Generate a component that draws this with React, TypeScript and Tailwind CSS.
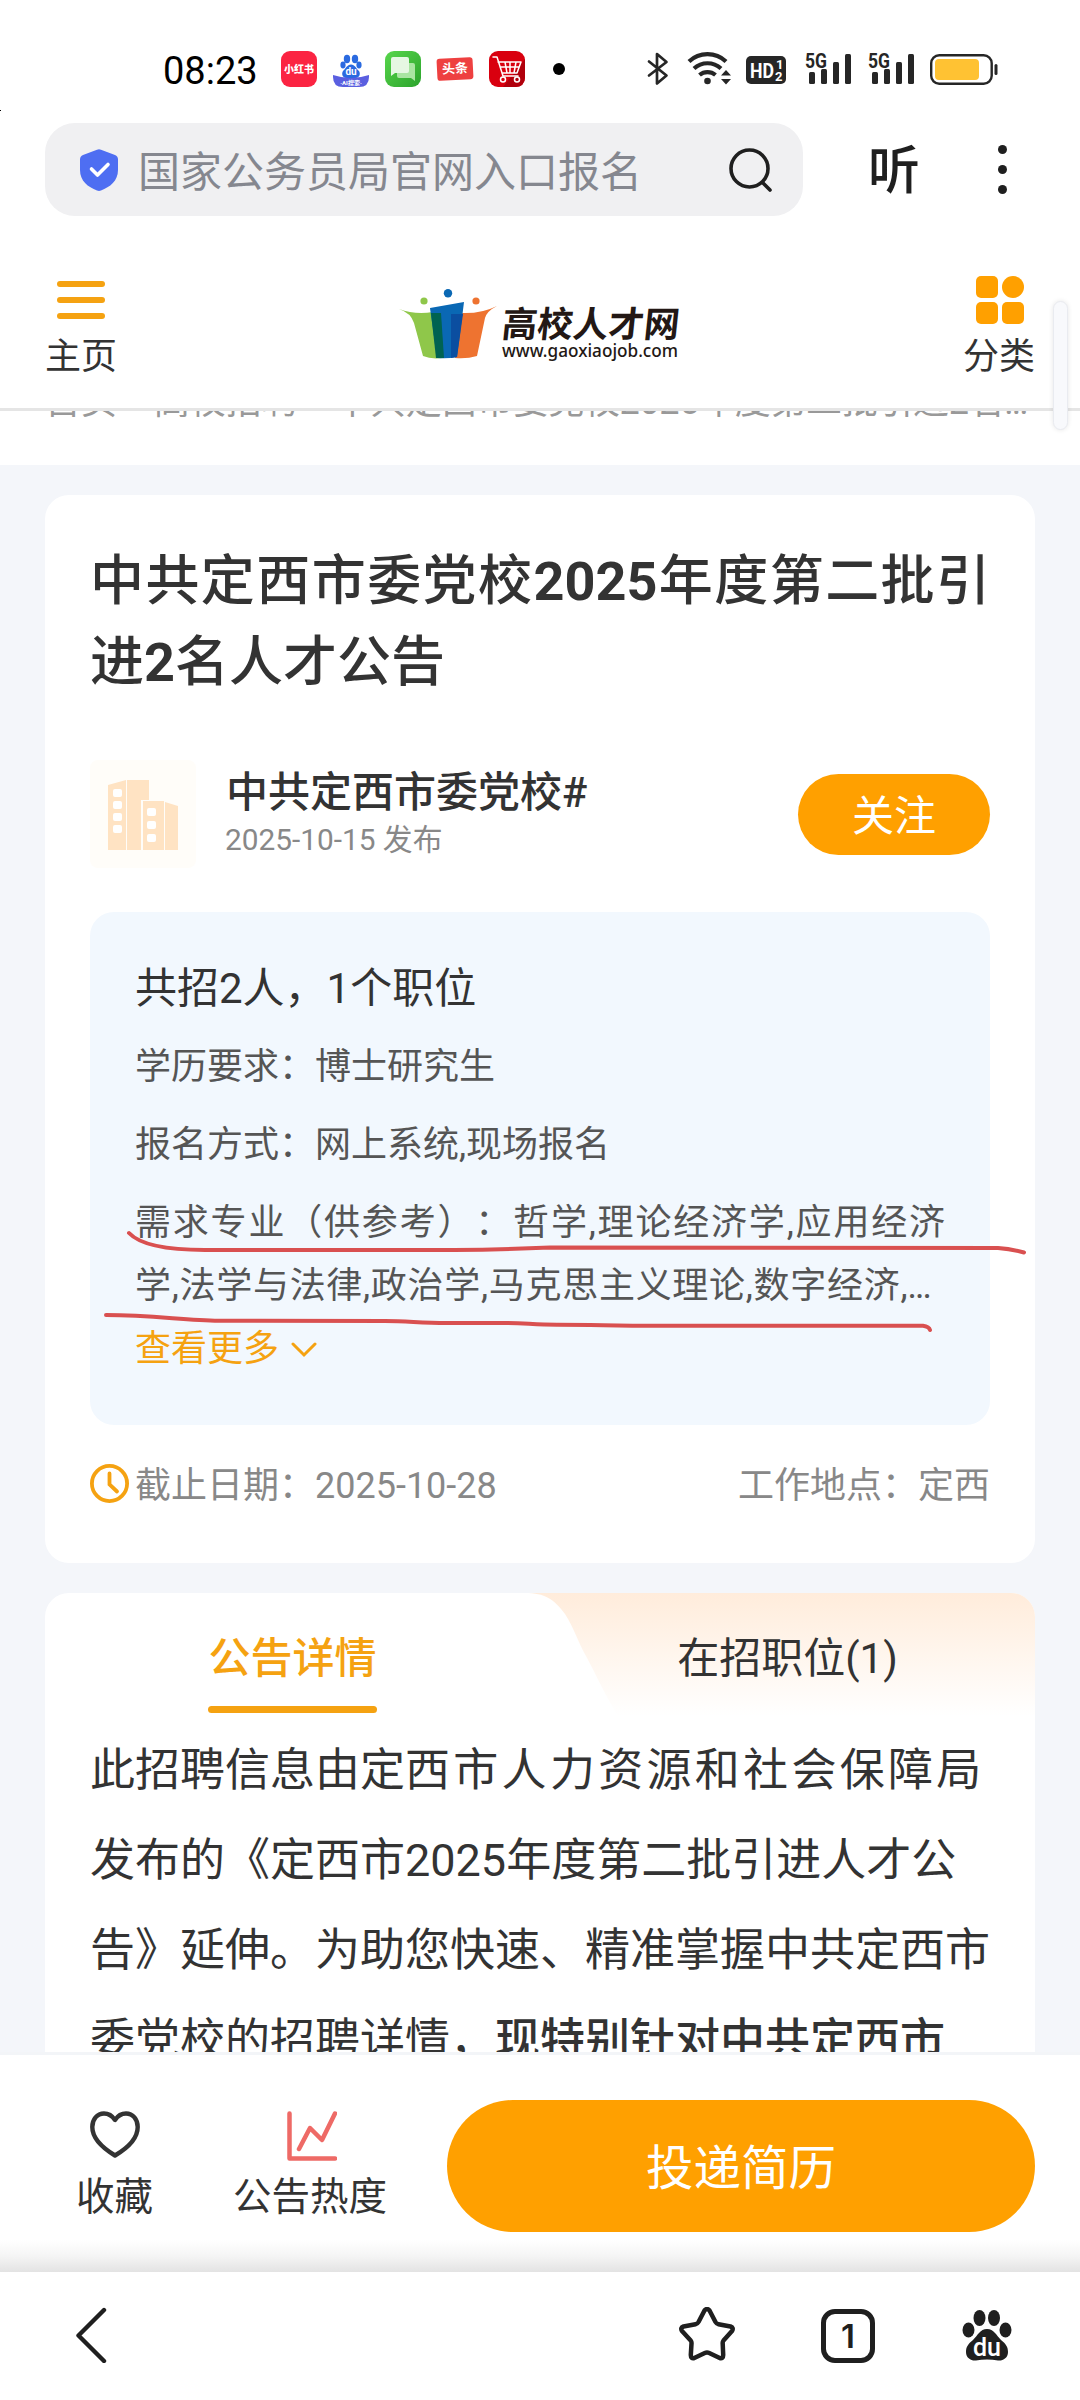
import clsx from 'clsx';
import type { ReactNode } from 'react';

type IconProps = {
  className?: string;
};

type InfoRow = {
  label: string;
  value: string;
};

const infoRows: InfoRow[] = [
  { label: '学历要求：', value: '博士研究生' },
  { label: '报名方式：', value: '网上系统,现场报名' },
];

function Signal() {
  return (
    <svg className="h-9 w-[47px] overflow-visible" viewBox="0 0 47 36" fill="#262626">
      <text
        x="0"
        y="16.5"
        fontFamily="Roboto, sans-serif"
        fontSize="21"
        fontWeight="700"
        textLength="22"
        lengthAdjust="spacingAndGlyphs"
      >
        5G
      </text>
      <rect x="4" y="21" width="6" height="12" rx="1.5" />
      <rect x="16" y="18" width="6" height="15" rx="1.5" />
      <rect x="28" y="11" width="6" height="22" rx="1.5" />
      <rect x="40" y="3" width="6" height="30" rx="1.5" />
    </svg>
  );
}

function AppIcons() {
  return (
    <div className="ml-[25px] flex items-center gap-4">
      <div className="flex size-9 items-center justify-center rounded-[9px] bg-[#fb2442] text-[10px] font-black text-white">
        小红书
      </div>
      <svg className="size-9" viewBox="0 0 36 36">
        <g fill="#2a6ae0">
          <ellipse cx="14" cy="8" rx="3.2" ry="4.2" />
          <ellipse cx="22" cy="8" rx="3.2" ry="4.2" />
          <ellipse cx="10" cy="14" rx="2.6" ry="3.4" />
          <ellipse cx="26" cy="14" rx="2.6" ry="3.4" />
          <path d="M18 13.5c4 0 5 4 8 6.500 2 3 0 7-3 7H13c-3 0-5-4-3-7 3-2.500 4-6.500 8-6.500Z" />
        </g>
        <path d="M0 24q18 6 36 0v2q0 10-10 10H10Q0 36 0 26Z" fill="#5a5fe0" />
        <text x="18" y="24" fontSize="10" fontWeight="700" fill="#fff" textAnchor="middle">
          du
        </text>
        <text x="18" y="33.5" fontSize="6" fontWeight="700" fill="#fff" textAnchor="middle">
          ·AI搜索·
        </text>
      </svg>
      <svg className="size-9" viewBox="0 0 36 36">
        <defs>
          <linearGradient id="chat" x1="0" y1="0" x2="1" y2="1">
            <stop offset="0" stopColor="#58d64c" />
            <stop offset="1" stopColor="#2ba32c" />
          </linearGradient>
        </defs>
        <rect width="36" height="36" rx="9" fill="url(#chat)" />
        <path d="M15 12h13q2 0 2 2v16l-4-3H14q-2 0-2-2V14Z" fill="#a9e5a2" />
        <path d="M8 6h14q2 0 2 2v12q0 2-2 2H10l-4 3V8q0-2 2-2Z" fill="#e6f7e3" />
      </svg>
      <div className="flex h-[22px] w-9 -rotate-3 items-center justify-center rounded-[3px] bg-[#ee4040] text-[13px] leading-[22px] font-bold text-white">
        头条
      </div>
      <svg className="size-9" viewBox="0 0 36 36">
        <rect width="36" height="36" rx="9" fill="#d9000f" />
        <path d="M36 8v18q0 10-10 10H14Z" fill="#b0000c" />
        <g fill="none" stroke="#fff" strokeWidth="1.5" strokeLinecap="round" strokeLinejoin="round">
          <path d="M4 6h4l6 19h15M9 11h23l-4 11H13M11 16h19M16 11l2 11M21 11v11M27 11l-2 11" />
          <circle cx="14" cy="28.5" r="2.5" />
          <circle cx="28" cy="28.5" r="2.5" />
        </g>
      </svg>
      <span className="ml-3 size-3 rounded-full bg-black" />
    </div>
  );
}

function StatusBar() {
  return (
    <div className="flex h-[110px] w-full items-center pt-[28px] pl-[163px]">
      <span className="mt-[3px] w-[93px] text-[38px] leading-none text-black">08:23</span>
      <AppIcons />
      <div className="ml-[82px] flex items-center">
        <svg className="h-9 w-[22px]" viewBox="0 0 22 36" fill="none" stroke="#262626" strokeWidth="2.7" strokeLinejoin="round" strokeLinecap="round">
          <path d="M2 10.5 19.5 24.5 10 32.5V3l9.5 8L2 24.5" />
        </svg>
        <svg className="ml-[18px] h-9 w-[46px]" viewBox="0 0 46 36" fill="none" stroke="#262626" strokeWidth="4.2">
          <path d="M2 10.5a27 27 0 0 1 37 0" />
          <path d="M7 17.5a20 20 0 0 1 27 0" />
          <path d="M12.5 24a12.5 12.5 0 0 1 16 0" />
          <circle cx="20.5" cy="30" r="3.3" fill="#262626" stroke="none" />
          <path d="M34 24.5 39 19l5 5.5ZM34 28l5 5.5 5-5.5Z" fill="#262626" stroke="none" />
        </svg>
        <svg className="ml-[13px] h-9 w-10" viewBox="0 0 40 36" fontFamily="Roboto, sans-serif" fontWeight="700" fill="#fff">
          <rect y="5" width="40" height="28" rx="5" fill="#262626" />
          <text x="4" y="26.5" fontSize="20.5" textLength="24" lengthAdjust="spacingAndGlyphs">
            HD
          </text>
          <text x="30" y="18" fontSize="13">1</text>
          <text x="29" y="29.5" fontSize="13">2</text>
        </svg>
        <div className="ml-[19px] flex gap-4">
          <Signal />
          <Signal />
        </div>
        <svg className="ml-[15px] h-9 w-[68px]" viewBox="0 0 68 36">
          <rect x="1.2" y="4.2" width="60.5" height="28.6" rx="8" fill="#fff" stroke="#262626" strokeWidth="2.4" />
          <rect x="5" y="8" width="44" height="21" rx="4" fill="#ffc233" />
          <rect x="64.5" y="13" width="3" height="11" rx="1.5" fill="#262626" />
        </svg>
      </div>
    </div>
  );
}

function AddressBar() {
  return (
    <div className="flex h-[138px] w-full items-start pt-[13px] pl-[45px]">
      <div className="flex h-[93px] w-[758px] items-center rounded-[30px] bg-[#f0f0f2] pl-[35px]">
        <svg className="h-[42px] w-[38px]" viewBox="0 0 38 42">
          <path
            d="M17 .8q2-.9 4 0L35 6q3 1.2 3 4.5V21c0 11-8 17-17 20.5q-2 .8-4 0C8 38 0 32 0 21V10.5Q0 7.2 3 6Z"
            fill="#4e6ef2"
          />
          <path d="m11.5 20 6 6L28 15.5" fill="none" stroke="#fff" strokeWidth="3.6" strokeLinecap="round" strokeLinejoin="round" />
        </svg>
        <span className="mt-[5px] ml-[20px] w-[505px] text-[42px] whitespace-nowrap text-[#85878f]">
          国家公务员局官网入口报名
        </span>
        <svg className="ml-[86px] size-11" viewBox="0 0 44 44" fill="none" stroke="#1f1f1f" strokeWidth="3.6" strokeLinecap="round">
          <circle cx="20.5" cy="20.5" r="18.5" />
          <path d="m34 35 7 7" />
        </svg>
      </div>
      <span className="mt-[15px] ml-[65px] text-[52px] leading-[68px] font-medium text-[#1f1f1f]">听</span>
      <div className="mt-[22px] ml-[78px] flex flex-col gap-[11px]">
        <span className="size-[9px] rounded-full bg-[#1f1f1f]" />
        <span className="size-[9px] rounded-full bg-[#1f1f1f]" />
        <span className="size-[9px] rounded-full bg-[#1f1f1f]" />
      </div>
    </div>
  );
}

function Logo() {
  return (
    <div className="flex">
      <svg className="h-[70px] w-[98px]" viewBox="0 0 98 70">
        <path d="M0 20q16 6 34 3l10 46q-12 1.5-20-2L15 34Q12 24 0 20Z" fill="#8fc74a" />
        <path d="M98 17q-16 8-36 7l-6 45q12 1 22-2l8-38Q88 22 98 17Z" fill="#ee7330" />
        <path d="M31 19 65 13l-7 55q-10 2-20 1Z" fill="#0a68b4" />
        <path d="M32 24h10l3 45h-8Z" fill="#006351" />
        <path d="M52 25h12l-6 43-6 1Z" fill="#0b4ea0" />
        <circle cx="25" cy="12" r="3.6" fill="#8fc74a" />
        <circle cx="49" cy="4.3" r="4.2" fill="#0a68b4" />
        <circle cx="77" cy="12" r="3.6" fill="#ee7330" />
      </svg>
      <div className="mt-[17px] ml-[5px] text-[#231815]">
        <div className="-skew-x-6 text-[35.5px] leading-[38px] font-bold whitespace-nowrap">高校人才网</div>
        <svg className="-mt-px h-6 w-[177px] overflow-visible" viewBox="0 0 177 24">
          <text
            x="0"
            y="14"
            fontFamily="'Noto Sans', sans-serif"
            fontSize="18"
            fontWeight="500"
            fill="#231815"
            textLength="176"
            lengthAdjust="spacingAndGlyphs"
          >
            www.gaoxiaojob.com
          </text>
        </svg>
      </div>
    </div>
  );
}

function SiteHeader() {
  return (
    <header className="flex h-[163px] w-full items-start border-b-3 border-[#e5e5e5] px-[45px] text-[36px] leading-[48px] text-[#333]">
      <div className="flex w-[72px] flex-col items-center">
        <div className="mt-[33px] flex w-12 flex-col gap-[10px]">
          <span className="h-[6px] rounded-full bg-[#f5a211]" />
          <span className="h-[6px] rounded-full bg-[#f5a211]" />
          <span className="h-[6px] rounded-full bg-[#f5a211]" />
        </div>
        <span className="mt-[14px]">主页</span>
      </div>
      <div className="mt-[41px] ml-[282px]">
        <Logo />
      </div>
      <div className="ml-auto flex w-[72px] flex-col items-center">
        <div className="mt-[28px] ml-[2px] grid grid-cols-2 gap-1">
          <span className="size-[22px] rounded-[5px] bg-[#ffa000]" />
          <span className="size-[22px] rounded-full bg-[#ffa000]" />
          <span className="size-[22px] rounded-[5px] bg-[#ffa000]" />
          <span className="size-[22px] rounded-[5px] bg-[#ffa000]" />
        </div>
        <span className="mt-[9px]">分类</span>
      </div>
    </header>
  );
}

function Breadcrumb() {
  return (
    <div className="flex h-[54px] w-full items-start overflow-hidden bg-white px-[45px] text-[36px] text-[#999]">
      <p className="-mt-[34px] h-[48px] w-[981px] leading-[50px] whitespace-nowrap">
        首页 &gt; 高校招聘 &gt;{' '}
        <span className="tracking-[-0.35px]">中共定西市委党校2025年度第二批引进2名</span>
        <span className="tracking-[-2px]">...</span>
      </p>
    </div>
  );
}

// Spreads the characters over the full width of the line
function FullLine({ children, className }: { children: ReactNode; className?: string }) {
  return (
    <div className={clsx('whitespace-nowrap [text-align-last:justify] [text-spacing-trim:space-all]', className)}>
      {children}
    </div>
  );
}

function BuildingIcon({ className }: IconProps) {
  return (
    <svg className={className} viewBox="0 0 70 70">
      <path d="M0 5 18 0v70H0ZM19 0h22v20h-8v50H19Z" fill="#ffe3c3" />
      <path d="M35 21h21v49H35ZM57 22l13 4v44H57Z" fill="#ffe3c3" />
      <g fill="#fff">
        <rect x="5" y="9" width="9" height="8" rx="2" />
        <rect x="5" y="21" width="9" height="8" rx="2" />
        <rect x="5" y="33" width="9" height="8" rx="2" />
        <rect x="5" y="45" width="9" height="8" rx="2" />
        <rect x="39" y="28" width="9" height="8" rx="2" />
        <rect x="39" y="41" width="9" height="8" rx="2" />
        <rect x="39" y="54" width="9" height="8" rx="2" />
      </g>
    </svg>
  );
}

function RedMarks() {
  return (
    <svg
      className="absolute top-[312px] left-[10px] h-[120px] w-[940px]"
      viewBox="101 1224 940 120"
      fill="none"
      stroke="#d95050"
      strokeWidth="4"
      strokeLinecap="round"
      strokeLinejoin="round"
    >
      <path d="M130 1233q16 17 76 17l249 0q50-.5 96-2.500l448 .5q14 1 26 4.500" />
      <path d="M107 1315C155 1315 185 1320.5 220 1320.7L386 1321C410 1321 420 1323 448 1323L503 1323C525 1323 535 1324.7 558 1324.7C600 1324.7 610 1325.7 661 1325.7L924 1325.7Q930 1326.5 931 1330" />
    </svg>
  );
}

function RecruitInfo() {
  return (
    <div className="relative mt-[44px] h-[513px] w-[900px] rounded-[24px] bg-[#f2f8fe] pt-[48px] pl-[45px] text-[36px] text-[#555]">
      <div className="text-[42px] leading-[58px] text-[#333]">共招2人，1个职位</div>
      <div className="mt-[10px]">
        {infoRows.map(({ label, value }) => (
          <div key={label} className="h-[78px] leading-[78px]">
            {label}
            {value}
          </div>
        ))}
      </div>
      <div className="mt-[8px] leading-[63px]">
        <FullLine className="w-[810px]">需求专业（供参考）：哲学,理论经济学,应用经济</FullLine>
        <FullLine className="w-[795px]">
          学,法学与法律,政治学,马克思主义理论,数字经济,<span className="tracking-[-2px]">...</span>
        </FullLine>
        <div className="flex items-center text-[#f5a211]">
          查看更多
          <svg className="ml-[12px] h-4 w-[26px]" viewBox="0 0 26 16" fill="none" stroke="currentColor" strokeWidth="3" strokeLinecap="round">
            <path d="m2 2 11 11L24 2" />
          </svg>
        </div>
      </div>
      <RedMarks />
    </div>
  );
}

function AnnouncementCard() {
  return (
    <section className="h-[1068px] w-[990px] rounded-[24px] bg-white px-[45px] pt-[46px]">
      <h1 className="text-[54px] leading-[81px] font-medium text-[#333]">
        <FullLine>
          中共定西市委党校<b className="font-bold">2025</b>年度第二批引
        </FullLine>
        <FullLine className="w-[355px]">
          进<b className="font-bold">2</b>名人才公告
        </FullLine>
      </h1>
      <div className="mt-[57px] flex h-[108px] items-center">
        <div className="flex h-[108px] w-[106px] items-center justify-center rounded-lg bg-[#fffdf9]">
          <BuildingIcon className="mt-px size-[70px]" />
        </div>
        <div className="ml-[30px] flex-1">
          <div className="text-[42px] leading-[52px] font-medium text-[#333]">中共定西市委党校#</div>
          <div className="-ml-px text-[29.8px] leading-[42px] text-[#888]">2025-10-15 发布</div>
        </div>
        <button
          type="button"
          className="h-[81px] w-[192px] rounded-full bg-[#ffa000] text-[42px] leading-[86px] text-white"
        >
          关注
        </button>
      </div>
      <RecruitInfo />
      <div className="mt-[33px] flex h-[52px] items-center text-[36px] text-[#888]">
        <svg className="size-10" viewBox="0 0 40 40" fill="none" stroke="#f5a211" strokeWidth="3.8" strokeLinecap="round">
          <circle cx="19.5" cy="19.5" r="17.6" />
          <path d="M19.500 9.500v11l7.500 7" />
        </svg>
        <span className="mt-[4px] ml-[5px]">截止日期：2025-10-28</span>
        <span className="mt-[4px] ml-auto">工作地点：定西</span>
      </div>
    </section>
  );
}

function DetailCard() {
  return (
    <section className="mt-[30px] h-[459px] w-[990px] overflow-hidden rounded-t-[24px] bg-white">
      <div className="relative grid h-[123px] grid-cols-2 text-[42px] text-[#333]">
        <svg className="absolute top-0 right-0 h-[123px] w-[510px]" viewBox="525 0 510 123">
          <defs>
            <linearGradient id="tab" x1="0" y1="0" x2="0" y2="1">
              <stop offset="0" stopColor="#ffecdb" />
              <stop offset="1" stopColor="#fff" />
            </linearGradient>
          </defs>
          <path d="M525 0h510v123H618c-9-14-20-37-32-60-8-14-12-28-21-42C554 6 545 0 525 0Z" fill="url(#tab)" />
        </svg>
        <div className="relative flex flex-col items-center">
          <span className="mt-[35px] leading-[62px] font-medium text-[#f5a211]">公告详情</span>
          <span className="mt-[16px] h-[7px] w-[169px] rounded-full bg-[#f5a211]" />
        </div>
        <div className="relative pt-[35px] text-center leading-[62px]">在招职位(1)</div>
      </div>
      <div className="mt-[10px] pl-[45px] text-[45px] leading-[90px] whitespace-nowrap text-[#333]">
        <p>
          此招聘信息由定<span className="tracking-[3.3px]">西市人力资源和社会保障局</span>
        </p>
        <p>发布的《定西市2025年度第二批引进人才公</p>
        <p>告》延伸。为助您快速、精准掌握中共定西市</p>
        <p>
          委党校的招聘详情，<strong className="font-medium">现特别针对中共定西市</strong>
        </p>
      </div>
    </section>
  );
}

function ActionBar() {
  return (
    <div className="relative flex h-[220px] w-full border-t-3 border-[#f3f5f8] bg-white text-[38.5px] leading-[50px] text-[#333]">
      <div className="absolute inset-x-0 bottom-0 h-8 bg-linear-to-b from-transparent via-[#f5f5f5] to-[#e3e3e3]" />
      <div className="mt-[56px] ml-[76px] flex w-[77px] flex-col items-center">
        <svg className="h-[47px] w-[50px]" viewBox="0 0 50 47" fill="none" stroke="#333" strokeWidth="4.4" strokeLinejoin="round">
          <path d="M25 9C21 3 17 2.5 14 2.5 7 2.5 2.3 8.5 2.3 16c0 12 12 22 22.7 28.500 11-6.500 22.700-16.500 22.700-28.500 0-7.500-4.700-13.500-11.700-13.500C33 2.500 29 3 25 9Z" />
        </svg>
        <span className="mt-[14px]">收藏</span>
      </div>
      <div className="mt-[56px] ml-[80px] flex w-[154px] flex-col items-center">
        <svg className="ml-1 size-[50px]" viewBox="0 0 50 50" fill="none" stroke="#ee6a66" strokeWidth="4.5" strokeLinecap="round" strokeLinejoin="round">
          <path d="M2.5 2.5v45H48" />
          <path d="m12 38 11-21 12 12L48 2.5" />
        </svg>
        <span className="mt-[11px]">公告热度</span>
      </div>
      <button
        type="button"
        className="relative mt-[45px] ml-[60px] h-[132px] w-[588px] rounded-full bg-[#ffa000] text-[47.5px] leading-[138px] text-white"
      >
        投递简历
      </button>
    </div>
  );
}

function BrowserBar() {
  return (
    <nav className="flex h-[128px] w-full items-start bg-white pt-[35px] pl-[74px]">
      <svg className="h-14 w-[34px]" viewBox="0 0 34 56" fill="none" stroke="#1f1f1f" strokeWidth="4.4" strokeLinecap="round" strokeLinejoin="round">
        <path d="M30 3 4.5 28.5 30 54" />
      </svg>
      <svg className="ml-[571px] h-[54px] w-14" viewBox="0 0 56 54" fill="none" stroke="#1f1f1f" strokeWidth="4.5" strokeLinejoin="round">
        <path d="M25.5 3.5q2.5-3 5 0l6 11.5q1 1.8 3 2.2l12 2.3q3.500 1.200 1.500 4.500l-8.500 9.500q-1 1.300-.8 3l.5 11.500q0 4-3.500 3l-10.500-5q-2.200-1-4.400 0l-10.500 5q-3.500 1-3.500-3L12.500 36.500q.2-1.700-.8-3L3 24q-2-3.300 1.500-4.500l12-2.300q2-.4 3-2.200Z" />
      </svg>
      <div className="mt-[2px] ml-[86px] flex h-[54px] w-[54px] items-center justify-center rounded-[14px] border-5 border-[#1f1f1f] font-[Inter] text-[33px] leading-none font-semibold text-[#1f1f1f]">
        1
      </div>
      <svg className="mt-[3px] ml-[87px] h-[54px] w-[50px]" viewBox="0 0 50 54" fill="#1f1f1f">
        <ellipse cx="17.5" cy="8" rx="6" ry="8" />
        <ellipse cx="32" cy="8" rx="6" ry="8" />
        <ellipse cx="6.500" cy="20" rx="6" ry="7.500" />
        <ellipse cx="43.500" cy="20" rx="6" ry="7.500" />
        <path d="M25 19c7 0 9 6 14 11 5 4 7 7 7 12 0 6-5 9-10 8.500-7-1.500-15-1.500-22 0-5 .5-10-2.500-10-8.500 0-5 2-8 7-12 5-5 7-11 14-11Z" />
        <text x="25" y="45.500" fontFamily="Roboto, sans-serif" fontSize="25" fontWeight="500" fill="#fff" textAnchor="middle">
          du
        </text>
      </svg>
    </nav>
  );
}

export default function App() {
  return (
    <div className="relative flex h-[2400px] w-[1080px] flex-col overflow-hidden bg-white font-[Roboto,'Noto_Sans_CJK_SC',sans-serif]">
      <StatusBar />
      <AddressBar />
      <SiteHeader />
      <Breadcrumb />
      <main className="flex h-[1587px] w-full flex-col items-center overflow-hidden bg-[#f4f6fa] pt-[30px]">
        <AnnouncementCard />
        <DetailCard />
      </main>
      <ActionBar />
      <BrowserBar />
      <span className="absolute top-[110px] left-0 size-px bg-black" />
      <div className="absolute top-[301px] left-[1053px] h-[129px] w-[15px] rounded-full border border-[#e9ebf0] bg-[#f8f9fc] shadow-[0_0_5px_rgba(0,0,0,0.1)]" />
    </div>
  );
}
